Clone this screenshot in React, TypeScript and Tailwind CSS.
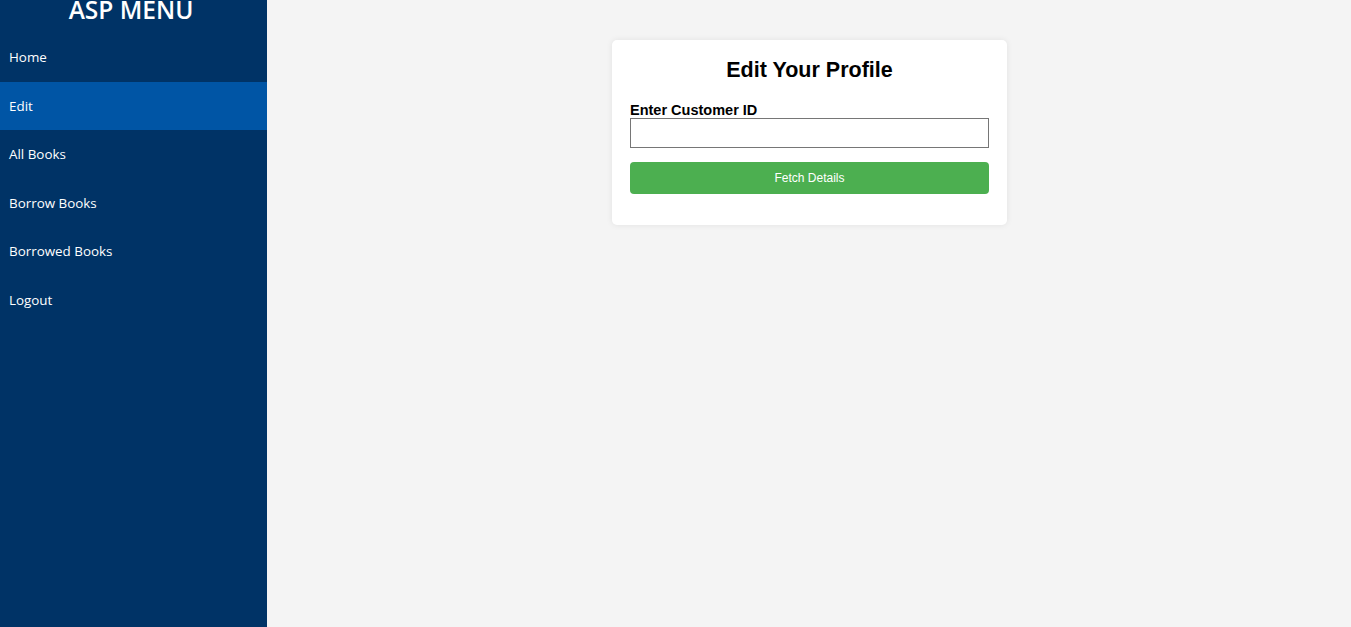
import React from "react";

const items = ["Home", "Edit", "All Books", "Borrow Books", "Borrowed Books", "Logout"];

export default function App() {
  return (
    <div className="flex h-screen w-full overflow-hidden bg-[#f4f4f4]">
      <aside
        className="flex w-[267px] shrink-0 flex-col bg-[#003366] text-white"
        style={{ fontFamily: '"Open Sans", "Noto Sans", sans-serif' }}
      >
        <div className="flex h-[33px] items-start justify-center overflow-hidden pr-[5px]">
          <h1 className="mt-[-7px] text-[24.5px] font-semibold leading-[34px]">ASP MENU</h1>
        </div>
        <nav className="flex flex-col">
          {items.map((it) => (
            <a
              key={it}
              className={
                "flex h-[48.5px] items-center pl-[9px] text-[13.4px] " +
                (it === "Edit" ? "bg-[#0055a5]" : "")
              }
            >
              {it}
            </a>
          ))}
        </nav>
      </aside>
      <main className="flex flex-1 justify-center pt-[40px] pl-px" style={{ fontFamily: '"Liberation Sans", Arial, sans-serif' }}>
        <div className="h-fit w-[395px] rounded-[5px] bg-white px-[18px] pt-[18px] pb-[31px] shadow-[0_0_6px_rgba(0,0,0,0.08)]">
          <h2 className="text-center text-[21.5px] font-bold leading-[24px] text-black">Edit Your Profile</h2>
          <label className="mt-[20px] block text-[14.5px] font-bold leading-[16px] text-black">Enter Customer ID</label>
          <input type="text" className="block h-[30px] w-full border border-[#767676] bg-white px-1 text-[13px] outline-none" />
          <button className="mt-[14px] block h-[32px] w-full rounded-[4px] bg-[#4caf50] text-[12px] text-white">
            Fetch Details
          </button>
        </div>
      </main>
    </div>
  );
}
